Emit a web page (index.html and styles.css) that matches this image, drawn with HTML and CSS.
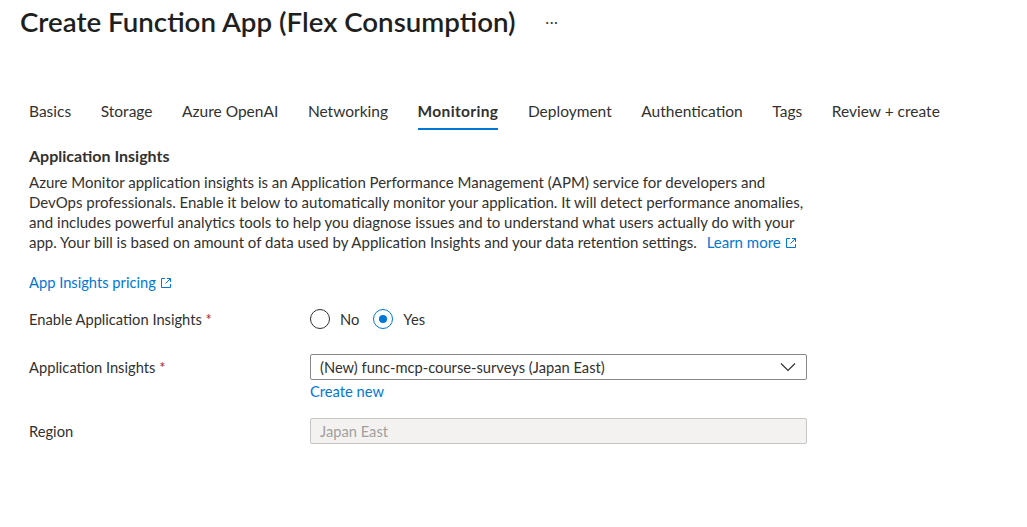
FILE: index.html
```html
<!DOCTYPE html>
<html>
<head>
<meta charset="utf-8">
<link rel="stylesheet" href="styles.css">
</head>
<body>
<header class="header">
  <h1 class="title">Create Function App (Flex Consumption)</h1>
  <span class="more">···</span>
</header>
<nav class="tabs">
  <span class="tab">Basics</span>
  <span class="tab">Storage</span>
  <span class="tab">Azure OpenAI</span>
  <span class="tab">Networking</span>
  <span class="tab active">Monitoring</span>
  <span class="tab">Deployment</span>
  <span class="tab">Authentication</span>
  <span class="tab">Tags</span>
  <span class="tab">Review + create</span>
</nav>
<main class="content">
  <h2 class="section-title">Application Insights</h2>
  <p class="desc">Azure Monitor application insights is an Application Performance Management (APM) service for developers and<br>DevOps professionals. Enable it below to automatically monitor your application. It will detect performance anomalies,<br>and includes powerful analytics tools to help you diagnose issues and to understand what users actually do with your<br>app. Your bill is based on amount of data used by Application Insights and your data retention settings. <a class="link">Learn more<svg class="ext" viewBox="0 0 12 12" width="12" height="12"><path d="M5 1.5H1.5v9h9V7" fill="none" stroke="currentColor" stroke-width="1"/><path d="M7 1.5h3.5V5M10.5 1.5L5.5 6.5" fill="none" stroke="currentColor" stroke-width="1"/></svg></a></p>
  <p class="pricing"><a class="link">App Insights pricing<svg class="ext" viewBox="0 0 12 12" width="12" height="12"><path d="M5 1.5H1.5v9h9V7" fill="none" stroke="currentColor" stroke-width="1"/><path d="M7 1.5h3.5V5M10.5 1.5L5.5 6.5" fill="none" stroke="currentColor" stroke-width="1"/></svg></a></p>

  <div class="row row-radio">
    <label class="label">Enable Application Insights <span class="req">*</span></label>
    <div class="radios">
      <span class="radio"><span class="circle"></span>No</span>
      <span class="radio checked"><span class="circle"></span>Yes</span>
    </div>
  </div>

  <div class="row row-select">
    <label class="label">Application Insights <span class="req">*</span></label>
    <div class="field">
      <div class="select">
        <span>(New) func-mcp-course-surveys (Japan East)</span>
        <svg class="chev" viewBox="0 0 16 10" width="16" height="10"><path d="M1 1.5l7 7 7-7" fill="none" stroke="#323130" stroke-width="1.2"/></svg>
      </div>
      <a class="link create">Create new</a>
    </div>
  </div>

  <div class="row row-region">
    <label class="label">Region</label>
    <div class="field">
      <div class="input disabled">Japan East</div>
    </div>
  </div>
</main>
</body>
</html>
```

FILE: styles.css
```css
* { box-sizing: border-box; }
html, body { margin: 0; padding: 0; background: #fff; }
body {
  font-family: "Lato", "Open Sans", sans-serif;
  font-size: 14.7px;
  color: #323130;
  width: 1027px;
  height: 527px;
  overflow: hidden;
}
.header {
  display: flex;
  align-items: center;
  padding: 4px 20px 0 20px;
  height: 40px;
}
.title {
  margin: 0;
  font-size: 27.7px;
  font-weight: 600;
  color: #201f1e;
  line-height: 34px;
}
.more {
  margin-left: 30px;
  font-size: 13px;
  color: #323130;
  letter-spacing: 1px;
}
.tabs {
  display: flex;
  gap: 29.6px;
  padding: 60px 29px 0 29px;
  height: 90px;
}
.tab {
  font-size: 15.5px;
  line-height: 22px;
  height: 28px;
  color: #323130;
}
.tab.active {
  font-weight: 700;
  letter-spacing: 0.35px;
  border-bottom: 2px solid #0078d4;
  height: 30px;
}
.content {
  padding: 16px 29px 0 29px;
}
.section-title {
  margin: 0;
  font-size: 16px;
  font-weight: 700;
  line-height: 20px;
  color: #323130;
}
.desc {
  margin: 6px 0 0 0;
  line-height: 20px;
  width: 800px;
  font-size: 15px;
  white-space: nowrap;
}
.link {
  color: #0078d4;
  text-decoration: none;
}
.desc .link { margin-left: 6px; }
.ext {
  margin-left: 4px;
  vertical-align: -1px;
}
.pricing {
  margin: 20px 0 0 0;
  line-height: 20px;
}
.row {
  display: flex;
}
.label {
  width: 281px;
  flex: none;
  line-height: 20px;
}
.req { color: #a4262c; }
.row-radio {
  margin-top: 7px;
  align-items: center;
  height: 40px;
}
.radios {
  display: flex;
  gap: 14px;
  align-items: center;
}
.radio {
  display: flex;
  align-items: center;
  gap: 10px;
}
.circle {
  width: 20px;
  height: 20px;
  border: 1px solid #323130;
  border-radius: 50%;
  position: relative;
}
.radio.checked .circle { border-color: #0078d4; }
.radio.checked .circle::after {
  content: "";
  position: absolute;
  left: 5px; top: 5px;
  width: 8px; height: 8px;
  border-radius: 50%;
  background: #0078d4;
}
.row-select {
  margin-top: 15px;
}
.row-select .label { padding-top: 3px; }
.field {
  width: 497px;
  display: flex;
  flex-direction: column;
}
.select, .input {
  height: 26px;
  border: 1px solid #8a8886;
  border-radius: 2px;
  display: flex;
  align-items: center;
  justify-content: space-between;
  padding: 0 10px 0 9px;
}
.create { line-height: 22px; }
.row-region {
  margin-top: 16px;
}
.row-region .label { padding-top: 3px; }
.input.disabled {
  background: #f3f2f1;
  border-color: #c8c6c4;
  color: #a19f9d;
}
```
